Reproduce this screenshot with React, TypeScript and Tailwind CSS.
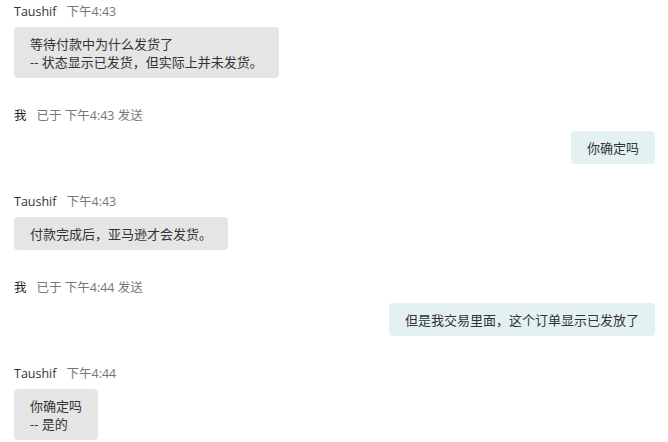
import React from 'react';

interface Message {
  from: 'them' | 'me';
  time: string;
  lines: string[];
}

const messages: Message[] = [
  { from: 'them', time: '下午4:43', lines: ['等待付款中为什么发货了', '-- 状态显示已发货，但实际上并未发货。'] },
  { from: 'me', time: '下午4:43', lines: ['你确定吗'] },
  { from: 'them', time: '下午4:43', lines: ['付款完成后，亚马逊才会发货。'] },
  { from: 'me', time: '下午4:44', lines: ['但是我交易里面，这个订单显示已发放了'] },
  { from: 'them', time: '下午4:44', lines: ['你确定吗', '-- 是的'] },
];

const font = { fontFamily: '"Open Sans", "Noto Sans CJK SC", sans-serif' };

export default function App() {
  return (
    <div className="w-[668px] h-[442px] overflow-hidden bg-white pl-[14px] pr-[13px] pt-[3px] text-[13px] text-[#333]" style={font}>
      <div className="flex flex-col gap-[29px]">
        {messages.map((m, i) => (
          <div key={i} className="flex flex-col gap-[7px]">
            <div className="flex items-center gap-[10px] h-[17px] text-[12.5px] leading-[17px]">
              {m.from === 'them' ? (
                <>
                  <span className="text-[#333]">Taushif</span>
                  <span className="text-[#777]">{m.time}</span>
                </>
              ) : (
                <>
                  <span className="text-[#222]">我</span>
                  <span className="text-[#777]">已于 {m.time} 发送</span>
                </>
              )}
            </div>
            <div className={`flex ${m.from === 'me' ? 'justify-end' : 'justify-start'}`}>
              <div
                className={`rounded-[4px] px-4 py-[7.5px] leading-[18px] ${
                  m.from === 'me' ? 'bg-[#e4f1f3]' : 'bg-[#e5e5e5]'
                }`}
              >
                {m.lines.map((l, j) => (
                  <div key={j}>{l}</div>
                ))}
              </div>
            </div>
          </div>
        ))}
      </div>
    </div>
  );
}
